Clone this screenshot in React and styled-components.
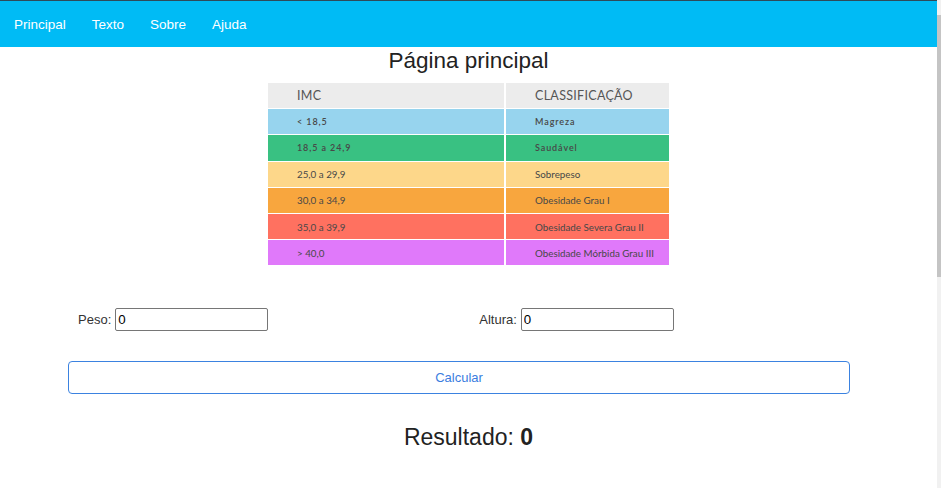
import styled, { createGlobalStyle } from 'styled-components';

const GlobalStyle = createGlobalStyle`
  body {
    margin: 0;
    font-family: 'Liberation Sans', Arial, sans-serif;
    background: #fff;
    color: #222;
    overflow: hidden;
  }
`;

const Window = styled.div`
  display: flex;
  height: 100vh;
`;

const Page = styled.div`
  flex: 1;
  min-width: 0;
`;

// drawn scrollbar, the page is longer than the window
const ScrollTrack = styled.div`
  width: 4px;
  background: #f1f1f1;
  padding-top: 15px;
`;

const ScrollThumb = styled.div`
  height: 262px;
  background: #c4c4c4;
`;

const NavBar = styled.nav`
  display: flex;
  align-items: center;
  height: 46px;
  padding-left: 1px;
  border-top: 1px solid #2e4a5a;
  background: #00bbf5;
`;

const NavLink = styled.a`
  padding: 0 13px;
  font-size: 13.5px;
  color: #fff;
  text-decoration: none;
  cursor: pointer;
`;

const Title = styled.h1`
  margin: 1px 0 0;
  font-size: 22.5px;
  font-weight: 400;
  line-height: 26px;
  text-align: center;
  color: #222;
`;

const ImcTable = styled.table`
  margin: 9px auto 0;
  width: 401px;
  border-collapse: collapse;
  font-family: Lato, 'Open Sans', sans-serif;
`;

const HeadCell = styled.th`
  height: 25.2px;
  padding: 0 0 0 29px;
  background: #ececec;
  border-bottom: 1px solid #fff;
  font-size: 12.5px;
  font-weight: 400;
  text-align: left;
  color: #555;
  letter-spacing: 0.3px;
  &:first-child {
    width: 207px;
    border-right: 2px solid #fff;
  }
`;

const Cell = styled.td`
  height: 25.2px;
  padding: 0 0 0 29px;
  background: ${(p) => p.$bg};
  border-bottom: 1px solid #fff;
  font-size: ${(p) => (p.$small ? '9px' : '9.8px')};
  font-weight: ${(p) => (p.$small ? 600 : 400)};
  letter-spacing: ${(p) => (p.$small ? '0.9px' : '0')};
  color: #484848;
  &:first-child {
    border-right: 2px solid #fff;
  }
`;

const FormArea = styled.div`
  margin: 42px 0 0 68px;
  width: 782px;
`;

const FieldRow = styled.div`
  display: flex;
  padding-left: 10px;
  gap: 211px;
`;

const Field = styled.label`
  display: flex;
  align-items: center;
  gap: 4px;
  font-size: 13px;
  color: #333;
`;

const Input = styled.input`
  box-sizing: border-box;
  width: 153px;
  height: 23px;
  padding: 1px 2px;
  border: 1px solid #767676;
  border-radius: 2px;
  font-family: 'Liberation Sans', Arial, sans-serif;
  font-size: 13.3px;
  color: #000;
`;

const CalcButton = styled.button`
  display: block;
  box-sizing: border-box;
  width: 100%;
  height: 33px;
  margin-top: 30px;
  border: 1px solid #3b82e0;
  border-radius: 4px;
  background: #fff;
  font-family: 'Liberation Sans', Arial, sans-serif;
  font-size: 13px;
  color: #3b7de0;
  cursor: pointer;
`;

const Result = styled.h2`
  margin: 30px 0 0;
  font-size: 23px;
  font-weight: 400;
  line-height: 26px;
  text-align: center;
  color: #222;
  b {
    font-weight: 700;
  }
`;

const rows = [
  ['< 18,5', 'Magreza', '#97d4ee', true],
  ['18,5 a 24,9', 'Saudável', '#39c182', true],
  ['25,0 a 29,9', 'Sobrepeso', '#fdd78a'],
  ['30,0 a 34,9', 'Obesidade Grau I', '#f8a63e'],
  ['35,0 a 39,9', 'Obesidade Severa Grau II', '#ff7160'],
  ['> 40,0', 'Obesidade Mórbida Grau III', '#e079fa'],
];

const App = () => {
  return (
    <Window>
      <GlobalStyle />
      <Page>
        <NavBar>
          <NavLink>Principal</NavLink>
          <NavLink>Texto</NavLink>
          <NavLink>Sobre</NavLink>
          <NavLink>Ajuda</NavLink>
        </NavBar>
        <Title>Página principal</Title>
        <ImcTable>
          <thead>
            <tr>
              <HeadCell>IMC</HeadCell>
              <HeadCell>CLASSIFICAÇÃO</HeadCell>
            </tr>
          </thead>
          <tbody>
            {rows.map(([imc, label, bg, small]) => (
              <tr key={imc}>
                <Cell $bg={bg} $small={small}>{imc}</Cell>
                <Cell $bg={bg} $small={small}>{label}</Cell>
              </tr>
            ))}
          </tbody>
        </ImcTable>
        <FormArea>
          <FieldRow>
            <Field>
              Peso: <Input type='text' defaultValue='0' />
            </Field>
            <Field>
              Altura: <Input type='text' defaultValue='0' />
            </Field>
          </FieldRow>
          <CalcButton>Calcular</CalcButton>
        </FormArea>
        <Result>
          Resultado: <b>0</b>
        </Result>
      </Page>
      <ScrollTrack>
        <ScrollThumb />
      </ScrollTrack>
    </Window>
  );
};

export default App;
